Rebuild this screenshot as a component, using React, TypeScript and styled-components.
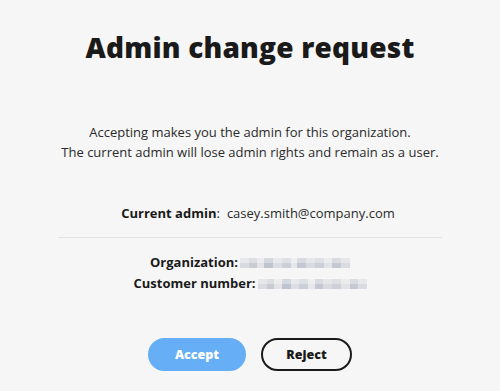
import React from "react";
import styled, { createGlobalStyle } from "styled-components";

const Global = createGlobalStyle`
  html, body { margin: 0; padding: 0; background: #f6f6f6; }
  body { font-family: "Open Sans", "Noto Sans", sans-serif; color: #1c1c1c; }
  * { box-sizing: border-box; }
`;

const Page = styled.main`
  width: 500px;
  height: 391px;
  display: flex;
  flex-direction: column;
  align-items: center;
  padding-top: 29px;
`;

const Title = styled.h1`
  margin: 0;
  font-family: "Open Sans", sans-serif;
  font-weight: 800;
  font-size: 28px;
  line-height: 36px;
  letter-spacing: 0.2px;
  color: #1a1a1a;
`;

const Intro = styled.p`
  margin: 57px 0 0;
  font-family: "Open Sans", sans-serif;
  font-size: 13px;
  line-height: 20px;
  text-align: center;
  color: #2a2a2a;
`;

const AdminRow = styled.div`
  margin-top: 41px;
  padding-left: 16px;
  display: flex;
  align-items: baseline;
  font-size: 13px;
  line-height: 20px;
`;

const Label = styled.span`
  font-family: "Open Sans", sans-serif;
  font-weight: 700;
  color: #1a1a1a;
`;

const Email = styled.span`
  font-family: "Open Sans", sans-serif;
  color: #2a2a2a;
  margin-left: 7px;
`;

const Divider = styled.hr`
  width: 384px;
  margin: 14px 0 0;
  border: 0;
  border-top: 1px solid #e2e2e2;
`;

const InfoList = styled.div`
  margin-top: 14px;
  display: flex;
  flex-direction: column;
  align-items: center;
`;

const InfoRow = styled.div`
  display: flex;
  align-items: center;
  font-size: 13px;
  line-height: 21px;
`;

const Redacted = styled.span<{ $w: number }>`
  display: inline-block;
  width: ${(p) => p.$w}px;
  height: 10px;
  margin-left: 2px;
  background:
    linear-gradient(180deg, rgba(255,255,255,0.35) 0 50%, rgba(0,0,0,0) 50% 100%),
    linear-gradient(90deg,
      #d9dbe0 0 8%, #c9ccd3 8% 15%, #e3e3e6 15% 22%, #bfc4ce 22% 30%,
      #dcdde2 30% 38%, #cbcfd7 38% 46%, #e6e6e8 46% 52%, #c3c8d2 52% 60%,
      #d8dadf 60% 68%, #ccd0d7 68% 76%, #e2e3e6 76% 84%, #c5c9d2 84% 92%, #dadce1 92% 100%);
  filter: blur(0.6px);
`;

const Actions = styled.div`
  margin-top: 44px;
  display: flex;
  gap: 15px;
`;

const Button = styled.button<{ $primary?: boolean }>`
  height: 33px;
  width: ${(p) => (p.$primary ? 98 : 91)}px;
  border-radius: 17px;
  font-family: "Open Sans", sans-serif;
  font-weight: 800;
  font-size: 12.5px;
  cursor: pointer;
  border: 2px solid ${(p) => (p.$primary ? "#66aef6" : "#1a1a1a")};
  background: ${(p) => (p.$primary ? "#66aef6" : "transparent")};
  color: ${(p) => (p.$primary ? "#ffffff" : "#1a1a1a")};
`;

export default function App() {
  return (
    <>
      <Global />
      <Page>
        <Title>Admin change request</Title>
        <Intro>
          Accepting makes you the admin for this organization.
          <br />
          The current admin will lose admin rights and remain as a user.
        </Intro>
        <AdminRow>
          <Label>Current admin</Label>:
          <Email>casey.smith@company.com</Email>
        </AdminRow>
        <Divider />
        <InfoList>
          <InfoRow>
            <Label>Organization:</Label>
            <Redacted $w={110} />
          </InfoRow>
          <InfoRow>
            <Label>Customer number:</Label>
            <Redacted $w={109} />
          </InfoRow>
        </InfoList>
        <Actions>
          <Button $primary>Accept</Button>
          <Button>Reject</Button>
        </Actions>
      </Page>
    </>
  );
}
